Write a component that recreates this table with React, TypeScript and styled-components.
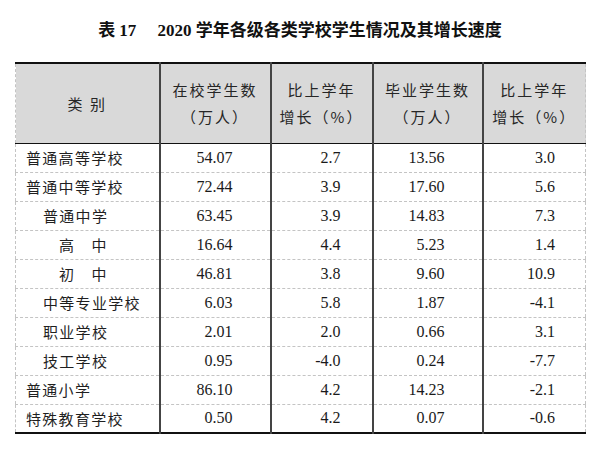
import React from "react";
import styled, {createGlobalStyle} from "styled-components";

const GlobalStyle = createGlobalStyle`
  html, body {
    margin: 0;
    padding: 0;
    background: #ffffff;
  }
  body {
    font-family: "Liberation Serif", "Noto Sans CJK SC", serif;
    color: #1a1a1a;
  }
`

type Row = {
  name: string
  level: number
  values: string[]
}

const rows: Row[] = [
  {name: '普通高等学校', level: 0, values: ['54.07', '2.7', '13.56', '3.0']},
  {name: '普通中等学校', level: 0, values: ['72.44', '3.9', '17.60', '5.6']},
  {name: '普通中学', level: 1, values: ['63.45', '3.9', '14.83', '7.3']},
  {name: '高\u3000中', level: 2, values: ['16.64', '4.4', '5.23', '1.4']},
  {name: '初\u3000中', level: 2, values: ['46.81', '3.8', '9.60', '10.9']},
  {name: '中等专业学校', level: 1, values: ['6.03', '5.8', '1.87', '-4.1']},
  {name: '职业学校', level: 1, values: ['2.01', '2.0', '0.66', '3.1']},
  {name: '技工学校', level: 1, values: ['0.95', '-4.0', '0.24', '-7.7']},
  {name: '普通小学', level: 0, values: ['86.10', '4.2', '14.23', '-2.1']},
  {name: '特殊教育学校', level: 0, values: ['0.50', '4.2', '0.07', '-0.6']},
]

const columns = [
  {width: 144},
  {width: 111, pad: 37},
  {width: 102, pad: 31},
  {width: 110, pad: 37},
  {width: 103, pad: 30},
]

const Page = styled.div`
  width: 600px;
  height: 452px;
  padding: 0 15px;
  box-sizing: border-box;
`

const Title = styled.h1`
  margin: 0;
  height: 62px;
  display: flex;
  align-items: center;
  justify-content: center;
  padding-bottom: 6px;
  box-sizing: border-box;
  font-size: 17px;
  font-weight: 700;
  color: #111;
  white-space: pre;
`

const Table = styled.table`
  width: 570px;
  border-collapse: collapse;
  table-layout: fixed;
  border-top: 2px solid #111;
  border-bottom: 2px solid #111;
  border-left: 1px dashed #c4c4c4;
  border-right: 1px dashed #c4c4c4;
`

const HeadRow = styled.tr`
  height: 80px;
  background: #d9d9d9;
  border-bottom: 1px solid #111;
`

const HeadCell = styled.th`
  font-family: "Noto Sans CJK SC", sans-serif;
  font-weight: 400;
  font-size: 15px;
  letter-spacing: 2px;
  line-height: 27px;
  color: #262626;
  text-align: center;
  padding: 0;
  border-left: 2px solid #444;
  &:first-child {
    border-left: none;
  }
`

const BodyRow = styled.tr`
  height: 29px;
  border-bottom: 1px dashed #c4c4c4;
  &:last-child {
    border-bottom: none;
  }
`

const NameCell = styled.td<{level: number}>`
  font-family: "Noto Sans CJK SC", sans-serif;
  font-size: 15px;
  letter-spacing: 1.3px;
  color: #1f1f1f;
  padding: 0 0 0 ${p => 10 + [0, 17, 33][p.level]}px;
  white-space: nowrap;
`

const NumCell = styled.td<{pad: number}>`
  font-family: "Liberation Serif", serif;
  font-size: 16px;
  color: #1a1a1a;
  text-align: right;
  padding: 0 ${p => p.pad}px 0 0;
  border-left: 2px solid #444;
`

const App = () => {
  return (
    <Page>
      <GlobalStyle/>
      <Title>{'表 17\u3000 2020 学年各级各类学校学生情况及其增长速度'}</Title>
      <Table>
        <colgroup>
          {columns.map((c, i) => <col key={i} style={{width: c.width}}/>)}
        </colgroup>
        <thead>
          <HeadRow>
            <HeadCell>类 别</HeadCell>
            <HeadCell>在校学生数<br/>（万人）</HeadCell>
            <HeadCell>比上学年<br/>增长（%）</HeadCell>
            <HeadCell>毕业学生数<br/>（万人）</HeadCell>
            <HeadCell>比上学年<br/>增长（%）</HeadCell>
          </HeadRow>
        </thead>
        <tbody>
          {rows.map(r => (
            <BodyRow key={r.name}>
              <NameCell level={r.level}>{r.name}</NameCell>
              {r.values.map((v, i) => (
                <NumCell key={i} pad={columns[i + 1].pad!}>{v}</NumCell>
              ))}
            </BodyRow>
          ))}
        </tbody>
      </Table>
    </Page>
  )
};

export default App
